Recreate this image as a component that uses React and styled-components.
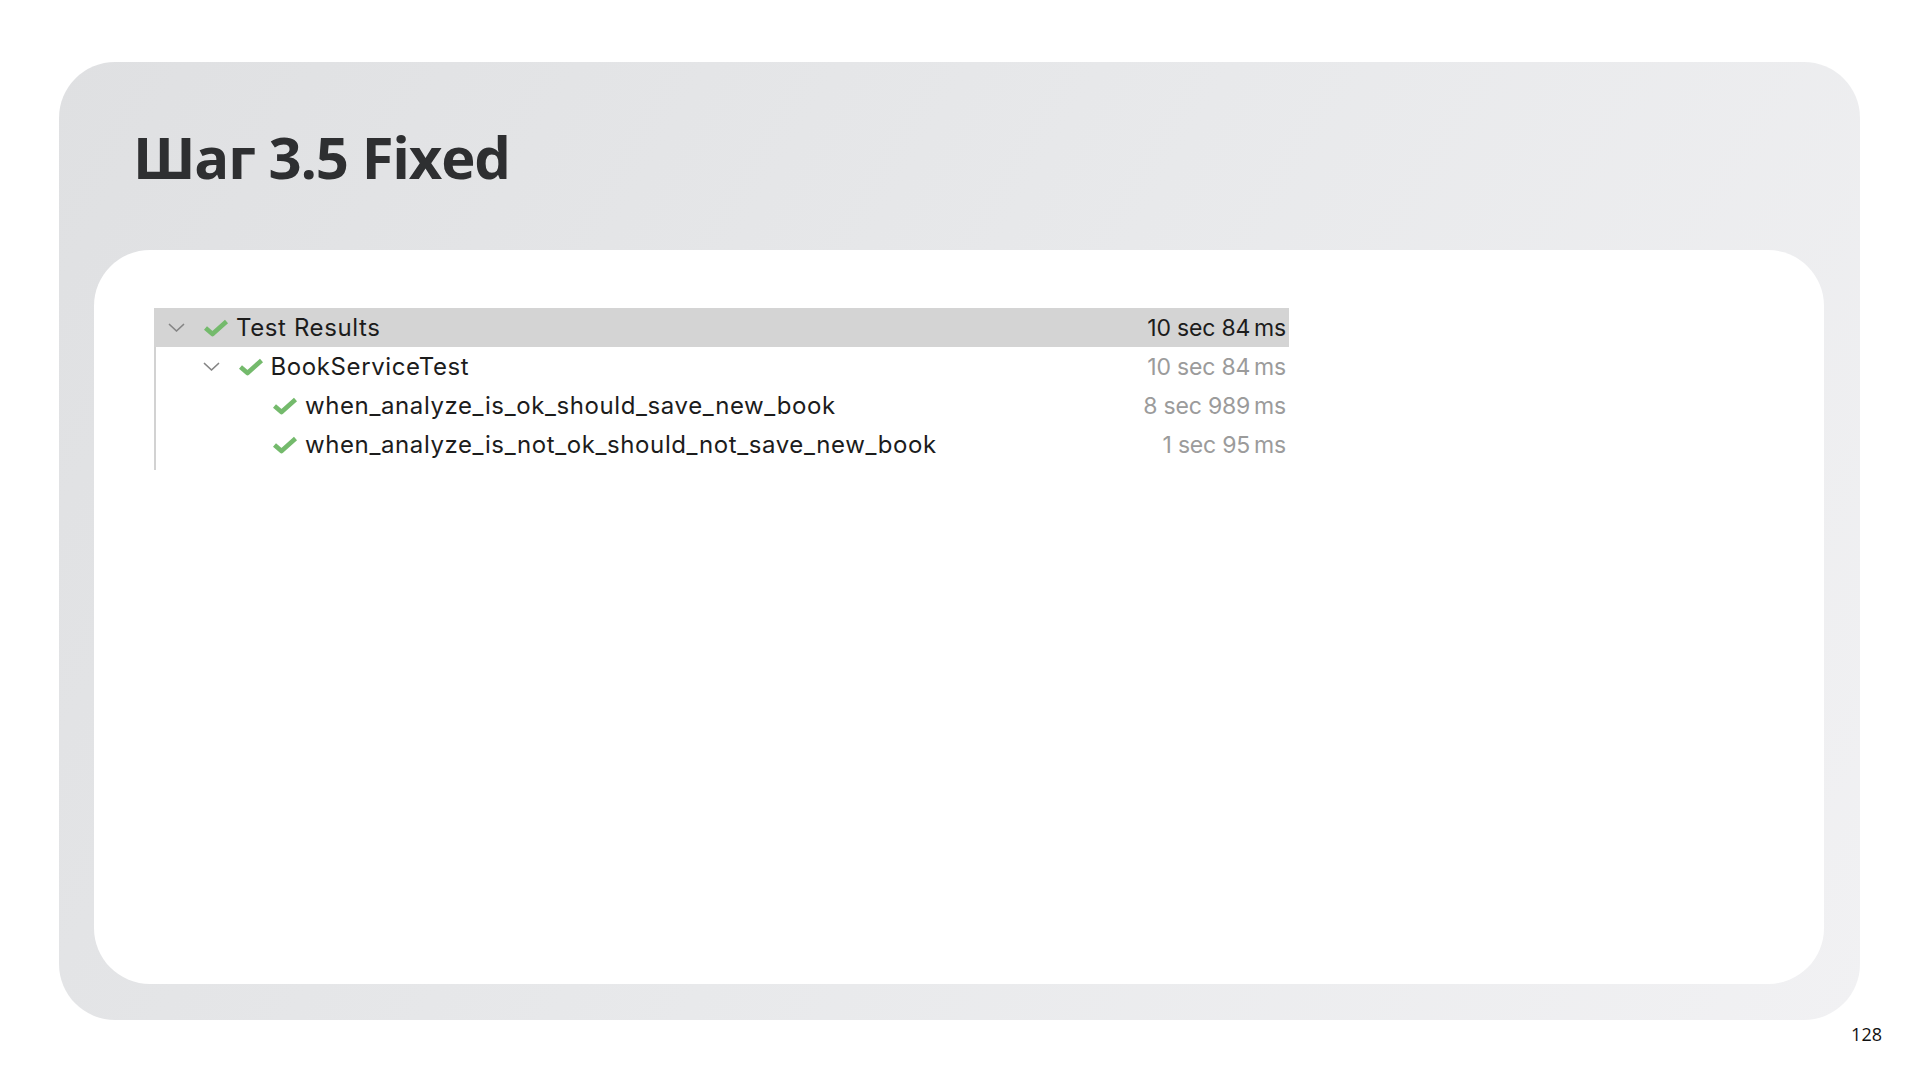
import React from 'react';
import styled, { createGlobalStyle } from 'styled-components';

const GlobalStyle = createGlobalStyle`
  html, body {
    margin: 0;
    padding: 0;
    background: #ffffff;
  }
  body {
    width: 1920px;
    height: 1082px;
    overflow: hidden;
  }
`;

const results = [
  { name: 'Test Results', time: '10 sec 84\u2009ms', depth: 0, expandable: true, selected: true },
  { name: 'BookServiceTest', time: '10 sec 84\u2009ms', depth: 1, expandable: true },
  { name: 'when_analyze_is_ok_should_save_new_book', time: '8 sec 989\u2009ms', depth: 2 },
  { name: 'when_analyze_is_not_ok_should_not_save_new_book', time: '1 sec 95\u2009ms', depth: 2 }
];

const Chevron = () => (
  <svg width="17" height="10" viewBox="0 0 17 10">
    <polyline points="1.5,1.5 8.5,8 15.5,1.5" fill="none" stroke="#858585" strokeWidth="1.7" strokeLinecap="round" strokeLinejoin="round" />
  </svg>
);

const Check = () => (
  <svg width="26" height="18" viewBox="0 0 26 18">
    <polyline points="2.5,9 9.5,15 23.5,2.5" fill="none" stroke="#74ba6c" strokeWidth="4.6" strokeLinejoin="round" />
  </svg>
);

const App = () => (
  <Page>
    <GlobalStyle />
    <Slide>
      <Title>Шаг 3.5 Fixed</Title>
      <Panel>
        <Tree>
          {results.map(item => (
            <Row key={item.name} selected={item.selected} depth={item.depth}>
              <Toggle>{item.expandable && <Chevron />}</Toggle>
              <Status><Check /></Status>
              <Name>{item.name}</Name>
              <Time selected={item.selected}>{item.time}</Time>
            </Row>
          ))}
        </Tree>
      </Panel>
    </Slide>
    <PageNumber>128</PageNumber>
  </Page>
);

export default App;

const Page = styled.div`
  display: flex;
  flex-direction: column;
  padding: 62px 0 0 59px;
`;

const Slide = styled.div`
  width: 1801px;
  height: 958px;
  box-sizing: border-box;
  display: flex;
  flex-direction: column;
  padding: 66px 36px 36px 35px;
  border-radius: 56px;
  background: linear-gradient(120deg, #dfe0e2 0%, #e8e9eb 50%, #f1f1f3 100%);
`;

const Title = styled.h1`
  margin: 0 0 64px 39px;
  font-family: 'Open Sans', 'Noto Sans', sans-serif;
  font-size: 58px;
  line-height: 58px;
  font-weight: 700;
  letter-spacing: -1.2px;
  color: #2e2f31;
`;

const Panel = styled.div`
  flex: 1;
  background: #ffffff;
  border-radius: 56px;
  padding: 58px 0 0 60px;
`;

const Tree = styled.div`
  width: 1133px;
  padding-bottom: 6px;
  border-left: 2px solid #d2d2d2;
  font-family: Inter, 'Noto Sans', sans-serif;
`;

const Row = styled.div`
  display: flex;
  align-items: center;
  height: 39px;
  margin-left: -2px;
  padding-left: ${props => 14 + props.depth * 34.5}px;
  padding-right: 3px;
  background: ${props => (props.selected ? '#d4d4d4' : 'transparent')};
`;

const Toggle = styled.div`
  width: 35px;
  display: flex;
  align-items: center;
`;

const Status = styled.div`
  width: 33px;
  display: flex;
  align-items: center;
`;

const Name = styled.div`
  flex: 1;
  font-size: 24px;
  letter-spacing: 0.6px;
  color: #1c1c1c;
  white-space: nowrap;
`;

const Time = styled.div`
  font-size: 23px;
  letter-spacing: -0.2px;
  color: ${props => (props.selected ? '#1c1c1c' : '#9b9b9b')};
`;

const PageNumber = styled.div`
  align-self: flex-end;
  margin: 2px 38px 0 0;
  font-family: 'Open Sans', 'Noto Sans', sans-serif;
  font-size: 18px;
  color: #111111;
`;
